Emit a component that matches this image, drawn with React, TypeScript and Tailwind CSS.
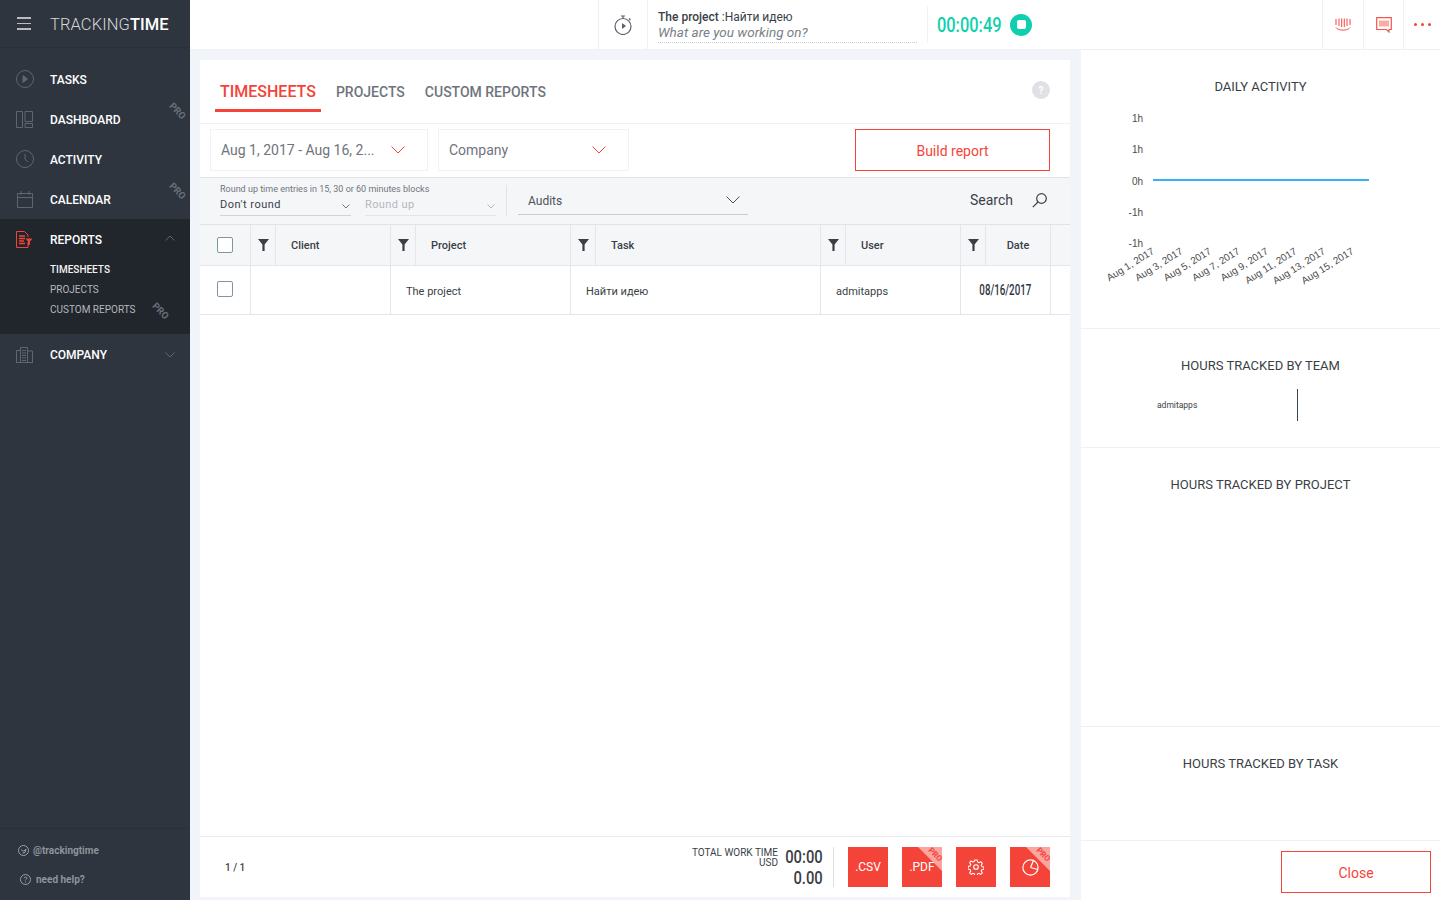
const pro = "absolute font-['Roboto',sans-serif] text-[9.500px] font-bold text-[#6a7079] rotate-45";

function Pro({ className }: { className: string }) {
  return <span className={pro + " " + className}>PRO</span>;
}

function Chevron({ width, color, up, className }: { width: number; color: string; up?: boolean; className?: string }) {
  const h = width / 2;
  return (
    <svg width={width} height={h + 1} viewBox={`0 0 ${width} ${h + 1}`} fill="none" stroke={color} className={className}>
      <path d={up ? `M.5 ${h + 0.5} ${h} 1 ${width - 0.5} ${h + 0.5}` : `M.5 .5 ${h} ${h} ${width - 0.5} .5`} />
    </svg>
  );
}

function Funnel() {
  return (
    <svg width="11" height="14" viewBox="0 0 11 14">
      <path d="M0 1h11L6.600 6.500V13H4.400V6.500z" fill="#3a3f47" />
    </svg>
  );
}

function Corner() {
  return (
    <div className="absolute right-0 top-0 h-[24px] w-[24px] bg-[#fba5a0] [clip-path:polygon(0_0,100%_0,100%_100%)]">
      <span className="absolute left-[9px] top-[4px] rotate-45 text-[8px] font-bold leading-none text-[#f4443a]">PRO</span>
    </div>
  );
}

function NavItem({ label, icon, badge }: { label: string; icon: React.ReactNode; badge?: boolean }) {
  return (
    <div className="relative flex h-[40px] items-center">
      <div className="flex w-[50px] justify-center pr-[1px]">{icon}</div>
      <span className="pt-[2px] text-[12px] font-medium text-white">{label}</span>
      {badge && <Pro className="right-[3px] top-[5px]" />}
    </div>
  );
}

const navIcon = { fill: "none", stroke: "#5f6670", strokeWidth: 1 };

function Sidebar() {
  return (
    <aside className="flex h-screen w-[190px] shrink-0 flex-col bg-[#2f353f]">
      <div className="flex h-[48px] items-center border-b border-[#2a3038]">
        <div className="flex w-[48px] justify-center">
          <div className="flex w-[14px] flex-col gap-[4px]">
            <div className="h-[1.500px] bg-[#b9bcc1]" />
            <div className="h-[1.500px] bg-[#b9bcc1]" />
            <div className="h-[1.500px] bg-[#b9bcc1]" />
          </div>
        </div>
        <span className="pl-[2px] pt-[3px] text-[16.500px] font-light tracking-[0.1px] text-[#d5d7da]">
          TRACKING<span className="font-medium text-white">TIME</span>
        </span>
      </div>
      <div className="pt-[11px]">
        <NavItem
          label="TASKS"
          icon={
            <svg width="18" height="18" viewBox="0 0 18 18" {...navIcon}>
              <circle cx="9" cy="9" r="8.500" />
              <path d="M7 5.500 11.500 9 7 12.500z" fill="#5f6670" />
            </svg>
          }
        />
        <NavItem
          label="DASHBOARD"
          badge
          icon={
            <svg width="17" height="17" viewBox="0 0 17 17" {...navIcon}>
              <path d="M.5.5h6v16h-6zM9 .5h7.500v10H9zM9 12.500h7.500v4H9z" />
            </svg>
          }
        />
        <NavItem
          label="ACTIVITY"
          icon={
            <svg width="18" height="18" viewBox="0 0 18 18" {...navIcon}>
              <circle cx="9" cy="9" r="8.500" />
              <path d="M9 4v5l3 3" />
            </svg>
          }
        />
        <NavItem
          label="CALENDAR"
          badge
          icon={
            <svg width="16" height="17" viewBox="0 0 16 17" {...navIcon}>
              <path d="M.5 2.500h15v14H.5zM.5 6.500h15M4 0v4M12 0v4" />
            </svg>
          }
        />
      </div>
      <div className="relative h-[115px] bg-[#21252c]">
        <div className="flex h-[40px] items-center">
          <div className="flex w-[50px] justify-center pr-[1px]">
            <svg width="17" height="17" viewBox="0 0 17 17" fill="none" stroke="#f4443a">
              <path d="M12 11v5.500H.5V.5h8l3.500 3.500v2" />
              <path d="M3 5h6M3 7.500h6M3 10h5M3 12.500h6" strokeWidth="1.400" />
              <path d="M9.500 7.500h7l-2.500 3v3l-2 1v-4z" fill="#f4443a" stroke="none" />
            </svg>
          </div>
          <span className="pt-[2px] text-[12px] font-medium text-white">REPORTS</span>
          <Chevron width={10} color="#5f6670" up className="absolute right-[15px] top-[16px]" />
        </div>
        <div className="flex flex-col pl-[50px] pt-[1px]">
          <span className="h-[20px] text-[10px] font-medium leading-[20px] text-[#f1f2f3]">TIMESHEETS</span>
          <span className="h-[20px] text-[10px] font-normal leading-[20px] text-[#b5b8bc]">PROJECTS</span>
          <span className="h-[20px] text-[10px] font-normal leading-[20px] text-[#b5b8bc]">CUSTOM REPORTS</span>
        </div>
        <Pro className="left-[151px] top-[85px]" />
      </div>
      <div className="relative flex h-[40px] items-center">
        <div className="flex w-[50px] justify-center pr-[1px]">
          <svg width="17" height="17" viewBox="0 0 17 17" {...navIcon}>
            <path d="M.5 16.500v-12h4M4.500 16.500V1.500h7v15M11.500 5h5v11.500M0 16.500h17M6 4.500h4M6 7h4M6 9.500h4M6 12h4M6 14.500h4" />
          </svg>
        </div>
        <span className="pt-[2px] text-[12px] font-medium text-white">COMPANY</span>
        <Chevron width={10} color="#5f6670" className="absolute right-[15px] top-[18px]" />
      </div>
      <div className="mt-auto h-[72px] border-t border-[#2a3038] pt-[13px]">
        <div className="flex h-[16px] items-center pl-[18px]">
          <svg width="11" height="11" viewBox="0 0 11 11" fill="none" stroke="#9a9ea4">
            <circle cx="5.500" cy="5.500" r="5" />
            <path d="M3 4.500c1 1 2 1.500 3 1.500L8 4 7 7.500 4.500 8" />
          </svg>
          <span className="pl-[4px] text-[10px] font-bold text-[#8f939a]">@trackingtime</span>
        </div>
        <div className="mt-[13px] flex h-[16px] items-center pl-[20px]">
          <svg width="11" height="11" viewBox="0 0 11 11" fill="none" stroke="#9a9ea4">
            <circle cx="5.500" cy="5.500" r="5" />
            <path d="M4 4.200c.2-1.600 3-1.600 3 0 0 1-1.500 1-1.500 2.200M5.500 7.500v1" />
          </svg>
          <span className="pl-[5px] text-[10px] font-bold text-[#8f939a]">need help?</span>
        </div>
      </div>
    </aside>
  );
}

function TopBar() {
  return (
    <header className="flex h-[50px] shrink-0 items-stretch border-b border-[#eef0f3] bg-white">
      <div className="w-[408px]" />
      <div className="flex w-[50px] items-center justify-center border-x border-[#eef0f3]">
        <svg width="18" height="20" viewBox="0 0 18 20" fill="none" stroke="#5b616a" strokeWidth="1.200">
          <circle cx="9" cy="11.500" r="8" />
          <path d="M7 1h4M9 1v2.500M15 3.500l1.500 1.500" />
          <path d="M8 8v6l4-3z" fill="#5b616a" stroke="none" />
        </svg>
      </div>
      <div className="w-[279px] pl-[10px] pt-[10px]">
        <div className="h-[14px] text-[12px] leading-[14px] text-[#3a3f47]">
          <span className="font-medium">The project </span>:Найти идею
        </div>
        <div className="h-[19px] w-[259px] border-b border-dotted border-[#c9ccd1] text-[13.500px] italic leading-[17px] text-[#7a7f87]">
          What are you working on?
        </div>
      </div>
      <div className="my-[6px] w-px bg-[#f1f2f4]" />
      <div className="flex items-center pl-[9px]">
        <span className="inline-block w-[64px] origin-left scale-x-[0.78] pt-[2px] text-[21px] font-medium whitespace-nowrap text-[#0fd0ae]">00:00:49</span>
        <div className="ml-[9px] flex h-[22px] w-[22px] items-center justify-center rounded-full bg-[#0fd0ae]">
          <div className="h-[9px] w-[9px] rounded-[2px] bg-white" />
        </div>
      </div>
      <div className="ml-auto flex">
        <div className="flex w-[41px] items-center justify-center border-l border-[#eef0f3]">
          <svg width="16" height="14" viewBox="0 0 16 14" fill="none" stroke="#f4564d">
            <path d="M1 1v6M4 .5V8M6.700.5V9M9.300.5V9M12 .5V8M15 1v6" strokeWidth="1.100" />
            <path d="M1 9.500c2 3.500 12 3.500 14 0" />
          </svg>
        </div>
        <div className="flex w-[40px] items-center justify-center border-l border-[#eef0f3]">
          <svg width="16" height="16" viewBox="0 0 16 16" fill="none" stroke="#f4564d">
            <path d="M.7.700h14.600v11.800H13v2.500l-2.500-2.500H.7z" strokeWidth="1.200" />
            <path d="M3 3.500h10v6H3z" fill="#fbaaa5" stroke="none" />
          </svg>
        </div>
        <div className="flex w-[37px] items-center justify-center gap-[4px] border-l border-[#eef0f3]">
          <div className="h-[3px] w-[3px] rounded-full bg-[#f4443a]" />
          <div className="h-[3px] w-[3px] rounded-full bg-[#f4443a]" />
          <div className="h-[3px] w-[3px] rounded-full bg-[#f4443a]" />
        </div>
      </div>
    </header>
  );
}

function HeadCell({ label, width, center }: { label: string; width: string; center?: boolean }) {
  return (
    <div className={"flex h-full border-l border-[#e3e7eb] " + width}>
      <div className="flex w-[24px] shrink-0 items-start justify-center pt-[13px]">
        <Funnel />
      </div>
      <div
        className={
          "flex flex-1 items-center border-l border-[#e3e7eb] pt-[2px] text-[11px] font-medium text-[#3a3f47] " +
          (center ? "justify-center border-r" : "pl-[15px]")
        }
      >
        {label}
      </div>
    </div>
  );
}

function Checkbox() {
  return <div className="h-[16px] w-[16px] rounded-[2px] border border-[#7f95a3] bg-white" />;
}

function Table() {
  return (
    <div>
      <div className="flex h-[41px] border-b border-[#e3e7eb] bg-[#f5f6f8]">
        <div className="flex w-[50px] items-center justify-center">
          <Checkbox />
        </div>
        <HeadCell label="Client" width="w-[140px]" />
        <HeadCell label="Project" width="w-[180px]" />
        <HeadCell label="Task" width="w-[250px]" />
        <HeadCell label="User" width="w-[140px]" />
        <HeadCell label="Date" width="w-[91px]" center />
      </div>
      <div className="flex h-[49px] items-stretch border-b border-[#e3e7eb] text-[11px] text-[#3a3f47]">
        <div className="flex w-[50px] items-start justify-center pt-[15px]">
          <Checkbox />
        </div>
        <div className="w-[140px] border-l border-[#e3e7eb]" />
        <div className="flex w-[180px] items-center border-l border-[#e3e7eb] pl-[15px] pt-[4px]">The project</div>
        <div className="flex w-[250px] items-center border-l border-[#e3e7eb] pl-[15px] pt-[4px]">Найти идею</div>
        <div className="flex w-[140px] items-center border-l border-[#e3e7eb] pl-[15px] pt-[4px]">admitapps</div>
        <div className="flex w-[91px] items-center justify-center border-x border-[#e3e7eb]">
          <span className="origin-center scale-x-[0.65] pr-[2px] text-[15px] font-medium whitespace-nowrap text-[#2f353f]">08/16/2017</span>
        </div>
      </div>
    </div>
  );
}

function FilterBar() {
  return (
    <div className="flex h-[48px] border-y border-[#dfe3e8] bg-[#f5f6f8]">
      <div className="w-[306px] pl-[20px] pt-[6px]">
        <div className="h-[11px] text-[9px] leading-[11px] text-[#70757d]">Round up time entries in 15, 30 or 60 minutes blocks</div>
        <div className="flex gap-[14px]">
          <div className="relative h-[21px] w-[131px] border-b border-[#ccd5d9] text-[11px] leading-[19px] tracking-[0.5px] text-[#3a3f47]">
            Don't round
            <Chevron width={8} color="#70757d" className="absolute right-[1px] top-[9px]" />
          </div>
          <div className="relative h-[21px] w-[131px] border-b border-[#e3e6e9] text-[11px] leading-[19px] tracking-[0.4px] text-[#b4b8bd]">
            Round up
            <Chevron width={8} color="#b4b8bd" className="absolute right-[1px] top-[9px]" />
          </div>
        </div>
      </div>
      <div className="mt-[7px] h-[31px] w-px bg-[#dfe3e8]" />
      <div className="relative ml-[11px] mt-[6px] h-[31px] w-[230px] border-b border-[#c7ccd2] pl-[10px] text-[12px] leading-[34px] text-[#4d525a]">
        Audits
        <Chevron width={14} color="#4d525a" className="absolute right-[8px] top-[12px]" />
      </div>
      <div className="ml-auto flex items-center pr-[23px] pb-[1px]">
        <span className="text-[14px] text-[#3a3f47]">Search</span>
        <svg width="15" height="15" viewBox="0 0 15 15" fill="none" stroke="#3a3f47" strokeWidth="1.200" className="ml-[19px]">
          <circle cx="9.500" cy="5.500" r="4.800" />
          <path d="M6 9 .8 14.200" />
        </svg>
      </div>
    </div>
  );
}

function Footer() {
  return (
    <div className="flex h-[61px] items-center border-t border-[#e8eaed] pl-[25px] pr-[20px]">
      <span className="text-[10px] font-medium text-[#3a3f47]">1 / 1</span>
      <div className="ml-auto self-start pt-[11px] text-right text-[10px] leading-[10px] text-[#3a3f47]">
        <div>TOTAL WORK TIME</div>
        <div>USD</div>
      </div>
      <div className="flex w-[45px] flex-col items-end text-[#3a3f47]">
        <span className="origin-right scale-x-[0.82] text-[18px] font-medium leading-[21px] whitespace-nowrap">00:00</span>
        <span className="origin-right scale-x-[0.82] text-[18px] font-medium leading-[21px] whitespace-nowrap">0.00</span>
      </div>
      <div className="ml-[10px] h-[40px] w-px bg-[#dcdfe3]" />
      <div className="ml-[14px] flex h-[40px] w-[40px] items-center justify-center bg-[#f4443a] text-[12px] text-white">.CSV</div>
      <div className="relative ml-[14px] flex h-[40px] w-[40px] items-center justify-center bg-[#f4443a] text-[12px] text-white">
        .PDF
        <Corner />
      </div>
      <div className="ml-[14px] flex h-[40px] w-[40px] items-center justify-center bg-[#f4443a] text-white">
        <svg width="16" height="16" viewBox="0 0 24 24" fill="none" stroke="white" strokeWidth="1.600">
          <path d="M10.300 2.500h3.400l.6 3 2.200 1 2.700-1.500 2.300 2.500-1.600 2.600.9 2.300 3 .6v3.300l-3 .6-.9 2.200 1.600 2.700-2.400 2.300-2.600-1.600-2.200.9-.6 3h-3.400l-.6-3-2.200-.9-2.600 1.600-2.400-2.300 1.600-2.700-.9-2.200-3-.6V12l3-.6.9-2.300-1.600-2.600L4.500 4l2.700 1.500 2.200-1z" transform="translate(0 -1)" />
          <circle cx="12" cy="13" r="3.500" transform="translate(0 -1)" />
        </svg>
      </div>
      <div className="relative ml-[14px] flex h-[40px] w-[40px] items-center justify-center bg-[#f4443a] text-white">
        <svg width="17" height="17" viewBox="0 0 17 17" fill="none" stroke="white" strokeWidth="1.200">
          <circle cx="8.500" cy="8.500" r="7.600" />
          <path d="M8.500 8.500 11.500 1.500M8.500 8.500l7.500 2" />
        </svg>
        <Corner />
      </div>
    </div>
  );
}

function MainPanel() {
  return (
    <section className="flex w-[870px] shrink-0 flex-col bg-white">
      <div className="flex h-[64px] items-stretch border-b border-[#f0f1f3] pl-[15px] pr-[20px]">
        <div className="flex h-[52px] items-end border-b-[3px] border-[#f4443a] px-[5px] pb-[8px] text-[16px] font-medium leading-[19px] text-[#f4443a]">TIMESHEETS</div>
        <div className="ml-[15px] flex h-[52px] items-end pb-[11px] text-[14px] font-medium leading-[18px] text-[#6f747c]">PROJECTS</div>
        <div className="ml-[20px] flex h-[52px] items-end pb-[11px] text-[14px] font-medium leading-[18px] text-[#6f747c]">CUSTOM REPORTS</div>
        <div className="ml-auto mt-[21px] flex h-[18px] w-[18px] items-center justify-center rounded-full bg-[#dfe1e4] text-[10px] font-bold text-white">?</div>
      </div>
      <div className="flex h-[53px] items-start pl-[10px] pr-[20px] pt-[5px]">
        <div className="flex h-[42px] w-[218px] items-center justify-between border border-[#f1f2f4] pl-[10px] pr-[22px] text-[14px] text-[#6f747c]">
          Aug 1, 2017 - Aug 16, 2...
          <Chevron width={14} color="#f4443a" />
        </div>
        <div className="ml-[10px] flex h-[42px] w-[191px] items-center justify-between border border-[#f1f2f4] pl-[10px] pr-[22px] text-[14px] text-[#6f747c]">
          Company
          <Chevron width={14} color="#f4443a" />
        </div>
        <div className="ml-auto flex h-[42px] w-[195px] items-center justify-center border border-[#f4443a] pt-[2px] text-[14px] text-[#f4443a]">Build report</div>
      </div>
      <FilterBar />
      <Table />
      <div className="flex-1" />
      <Footer />
    </section>
  );
}

const dates = ["Aug 1, 2017", "Aug 3, 2017", "Aug 5, 2017", "Aug 7, 2017", "Aug 9, 2017", "Aug 11, 2017", "Aug 13, 2017", "Aug 15, 2017"];
const ticks = [
  ["1h", 28],
  ["1h", 59],
  ["0h", 91],
  ["-1h", 122],
  ["-1h", 153],
] as const;

function DailyChart() {
  return (
    <svg width="359" height="210" className="font-['Liberation_Sans',sans-serif]">
      {ticks.map(([t, y], i) => (
        <text key={i} x="62" y={y} textAnchor="end" fontSize="10" fill="#4d4d4d">
          {t}
        </text>
      ))}
      <line x1="72" x2="288" y1="86" y2="86" stroke="#35b5f0" strokeWidth="2" />
      {dates.map((d, i) => (
        <text
          key={d}
          x={74 + i * 28.5}
          y="159"
          textAnchor="end"
          fontSize="10"
          fill="#4d4d4d"
          transform={`rotate(-32 ${74 + i * 28.5} 159)`}
        >
          {d}
        </text>
      ))}
    </svg>
  );
}

function RightPanel() {
  const title = "text-center text-[13px] leading-[14px] text-[#3a3f47]";
  return (
    <aside className="flex w-[359px] shrink-0 flex-col bg-white">
      <div className="h-[279px] border-b border-[#eef0f3] pt-[30px]">
        <div className={title}>DAILY ACTIVITY</div>
        <DailyChart />
      </div>
      <div className="h-[119px] border-b border-[#eef0f3] pt-[30px]">
        <div className={title}>HOURS TRACKED BY TEAM</div>
        <div className="flex items-center pt-[16px]">
          <span className="w-[216px] pl-[76px] text-[8.500px] text-[#3a3f47]">admitapps</span>
          <div className="h-[32px] w-px bg-[#3a4654]" />
        </div>
      </div>
      <div className="h-[279px] border-b border-[#eef0f3] pt-[30px]">
        <div className={title}>HOURS TRACKED BY PROJECT</div>
      </div>
      <div className="h-[114px] border-b border-[#eef0f3] pt-[30px]">
        <div className={title}>HOURS TRACKED BY TASK</div>
      </div>
      <div className="flex flex-1 items-start justify-end pr-[9px] pt-[10px]">
        <div className="flex h-[42px] w-[150px] items-center justify-center border border-[#f4443a] pt-[2px] text-[14px] text-[#f4443a]">Close</div>
      </div>
    </aside>
  );
}

export default function App() {
  return (
    <div className="flex h-screen w-[1440px] overflow-hidden bg-[#f1f4f8] font-['Roboto',sans-serif]">
      <Sidebar />
      <div className="flex flex-1 flex-col">
        <TopBar />
        <div className="flex h-[850px] gap-[11px] pl-[10px]">
          <div className="flex h-[847px] pt-[10px]">
            <MainPanel />
          </div>
          <RightPanel />
        </div>
      </div>
    </div>
  );
}
